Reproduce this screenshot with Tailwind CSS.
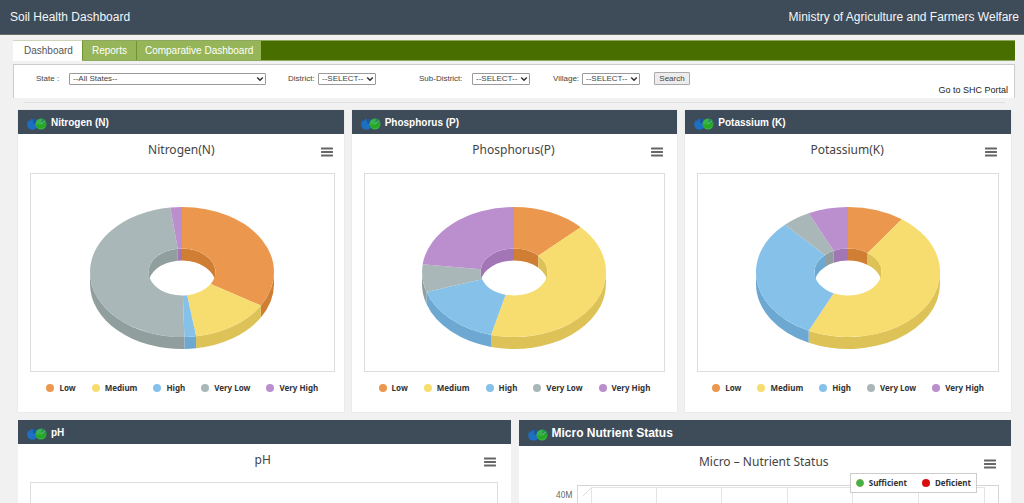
<!DOCTYPE html>
<html lang="en">
<head>
<meta charset="utf-8">
<meta name="viewport" content="width=device-width, initial-scale=1">
<title>Soil Health Dashboard</title>
<script src="https://cdn.jsdelivr.net/npm/@tailwindcss/browser@4"></script>
</head>
<body class="flex min-h-screen flex-col bg-[#f1f1f1] font-['Liberation_Sans',sans-serif]">

<svg class="hidden" aria-hidden="true">
  <symbol id="logo" viewBox="0 0 20 12">
    <path d="M5.500 .8 6.500 5 8.500 .6 10.500 3V9L8 11.300 5 11.800 2 10.700 .3 8 .4 4.500 2 2 3.200 3.500 4 1.200Z" fill="#1d6fc4"/>
    <path d="M6 .8 8.500 1 10 3 8 6 6.500 5Z" fill="#1c55a0"/>
    <circle cx="14" cy="6" r="5.500" fill="#37b34a"/>
    <path d="M8.500 6.500 14 6.500 19.200 4.500A5.500 5.500 0 0 1 8.500 6.500Z" fill="#27a822"/>
    <path d="M14 6 15 .6A5.500 5.500 0 0 1 19.400 4.800Z" fill="#2b8a55"/>
    <path d="M14 6 18 3" stroke="#7fdc8c" stroke-width=".7"/>
  </symbol>
  <symbol id="menu" viewBox="0 0 12 10">
    <path d="M.8 1.500H11.200M.8 5H11.200M.8 8.500H11.200" stroke="#666" stroke-width="2" stroke-linecap="round"/>
  </symbol>
  <symbol id="caret" viewBox="0 0 8 6">
    <path d="M1.200 1.500 4 4.300 6.800 1.500" fill="none" stroke="#333" stroke-width="1.500"/>
  </symbol>
</svg>

<header class="flex h-[35px] items-center justify-between border-b border-[#6b6b66] bg-[#3e4b58] pr-[5px] pl-[10px] text-[12px] text-[#f4f6f8]">
  <h1>Soil Health Dashboard</h1>
  <p>Ministry of Agriculture and Farmers Welfare</p>
</header>

<nav class="mt-[5px] mr-[9px] ml-[13px] flex h-[21px] border-y border-[#8fa860] bg-[#496e00] text-[10px] leading-[19px]">
  <a href="#" class="-mt-px -mb-px border-t border-[#cdd6bb] bg-white pr-[9px] pl-[11px] text-[#555]">Dashboard</a>
  <a href="#" class="border-r border-l border-[#6f9330] bg-[#95b558] px-[9px] text-white">Reports</a>
  <a href="#" class="bg-[#95b558] px-[8px] text-white">Comparative Dashboard</a>
</nav>

<form class="mt-[3px] mr-[9px] ml-[13px] h-[34px] border-t border-r border-l border-[#ccc] bg-white text-[8px] text-[#444]">
  <div class="flex items-center pt-[7px] pl-[22px]">
    <label for="state" class="w-[33px]">State :</label>
    <span class="grid w-[197px] items-center">
      <select id="state" class="col-start-1 row-start-1 h-[12px] appearance-none rounded-[1px] border border-[#999] bg-white pl-[3px] leading-none"><option>--All States--</option></select>
      <svg class="pointer-events-none col-start-1 row-start-1 mr-[2px] h-[6px] w-[8px] justify-self-end"><use href="#caret"/></svg>
    </span>
    <label for="district" class="ml-[22px] w-[30px]">District:</label>
    <span class="grid w-[58px] items-center">
      <select id="district" class="col-start-1 row-start-1 h-[12px] appearance-none rounded-[1px] border border-[#999] bg-white pl-[3px] leading-none"><option>--SELECT--</option></select>
      <svg class="pointer-events-none col-start-1 row-start-1 mr-[2px] h-[6px] w-[8px] justify-self-end"><use href="#caret"/></svg>
    </span>
    <label for="sub" class="ml-[43px] w-[53px]">Sub-District:</label>
    <span class="grid w-[58px] items-center">
      <select id="sub" class="col-start-1 row-start-1 h-[12px] appearance-none rounded-[1px] border border-[#999] bg-white pl-[3px] leading-none"><option>--SELECT--</option></select>
      <svg class="pointer-events-none col-start-1 row-start-1 mr-[2px] h-[6px] w-[8px] justify-self-end"><use href="#caret"/></svg>
    </span>
    <label for="village" class="ml-[23px] w-[29px]">Village:</label>
    <span class="grid w-[58px] items-center">
      <select id="village" class="col-start-1 row-start-1 h-[12px] appearance-none rounded-[1px] border border-[#999] bg-white pl-[3px] leading-none"><option>--SELECT--</option></select>
      <svg class="pointer-events-none col-start-1 row-start-1 mr-[2px] h-[6px] w-[8px] justify-self-end"><use href="#caret"/></svg>
    </span>
    <button type="button" class="ml-[14px] h-[13px] w-[36px] rounded-[1px] border border-[#aaa] bg-[#ececec] leading-none">Search</button>
  </div>
  <div class="pr-[6px] text-right text-[9px] leading-[10px] text-[#222]"><a href="#">Go to SHC Portal</a></div>
</form>
<hr class="mt-[4px] mr-[19px] ml-[24px] border-[#dfdfdf]">

<main class="mt-[7px] mr-[13px] ml-[18px] flex flex-1 flex-col gap-2">
  <div class="grid grid-cols-3 gap-2 font-['Noto_Sans',sans-serif]">
    <section class="h-[302px] bg-white shadow-[0_0_1px_#ccc]">
      <h2 class="flex h-[24px] items-center gap-[4px] bg-[#3e4b58] pl-[9px] font-['Liberation_Sans',sans-serif] text-[10px] font-bold text-white"><svg class="mt-[3px] h-[12px] w-[20px]"><use href="#logo"/></svg>Nitrogen (N)</h2>
      <div class="mr-[9px] ml-[12px]">
        <div class="grid h-[39px] grid-cols-[1fr_auto_1fr] pr-[2px]">
          <h3 class="col-start-2 pt-[7px] text-[12px] leading-[18px] text-[#444]">Nitrogen(N)</h3>
          <button type="button" aria-label="Chart menu" class="mt-[13px] h-[10px] w-[12px] justify-self-end"><svg class="block h-[10px] w-[12px]"><use href="#menu"/></svg></button>
        </div>
        <div class="flex h-[199px] justify-center border border-[#ddd] pt-[31px]"><svg data-pie="121,171.200,178.500,352.700,360" class="h-[148px] w-[188px]" viewBox="-94 -67 188 148"></svg></div>
        <ul data-legend class="flex justify-center gap-[16px] pt-[10px] text-[8px] leading-[12px] font-bold text-[#333]"></ul>
      </div>
    </section>
    <section class="h-[302px] bg-white shadow-[0_0_1px_#ccc]">
      <h2 class="flex h-[24px] items-center gap-[4px] bg-[#3e4b58] pl-[9px] font-['Liberation_Sans',sans-serif] text-[10px] font-bold text-white"><svg class="mt-[3px] h-[12px] w-[20px]"><use href="#logo"/></svg>Phosphorus (P)</h2>
      <div class="mx-[12px]">
        <div class="grid h-[39px] grid-cols-[1fr_auto_1fr] pr-[2px]">
          <h3 class="col-start-2 pt-[7px] text-[12px] leading-[18px] text-[#444]">Phosphorus(P)</h3>
          <button type="button" aria-label="Chart menu" class="mt-[13px] h-[10px] w-[12px] justify-self-end"><svg class="block h-[10px] w-[12px]"><use href="#menu"/></svg></button>
        </div>
        <div class="flex h-[199px] justify-center border border-[#ddd] pt-[31px]"><svg data-pie="46.500,194.500,252,276.800,360" class="h-[148px] w-[188px]" viewBox="-94 -67 188 148"></svg></div>
        <ul data-legend class="flex justify-center gap-[16px] pt-[10px] text-[8px] leading-[12px] font-bold text-[#333]"></ul>
      </div>
    </section>
    <section class="h-[302px] bg-white shadow-[0_0_1px_#ccc]">
      <h2 class="flex h-[24px] items-center gap-[4px] bg-[#3e4b58] pl-[9px] font-['Liberation_Sans',sans-serif] text-[10px] font-bold text-white"><svg class="mt-[3px] h-[12px] w-[20px]"><use href="#logo"/></svg>Potassium (K)</h2>
      <div class="mx-[12px]">
        <div class="grid h-[39px] grid-cols-[1fr_auto_1fr] pr-[2px]">
          <h3 class="col-start-2 pt-[7px] text-[12px] leading-[18px] text-[#444]">Potassium(K)</h3>
          <button type="button" aria-label="Chart menu" class="mt-[13px] h-[10px] w-[12px] justify-self-end"><svg class="block h-[10px] w-[12px]"><use href="#menu"/></svg></button>
        </div>
        <div class="flex h-[199px] justify-center border border-[#ddd] pt-[31px]"><svg data-pie="35.800,205.300,316.700,334.700,360" class="h-[148px] w-[188px]" viewBox="-94 -67 188 148"></svg></div>
        <ul data-legend class="flex justify-center gap-[16px] pt-[10px] text-[8px] leading-[12px] font-bold text-[#333]"></ul>
      </div>
    </section>
  </div>

  <div class="grid flex-1 grid-cols-2 gap-2 font-['Noto_Sans',sans-serif]">
    <section class="flex flex-col bg-white">
      <h2 class="flex h-[24px] items-center gap-[4px] bg-[#3e4b58] pl-[9px] font-['Liberation_Sans',sans-serif] text-[10px] font-bold text-white"><svg class="mt-[3px] h-[12px] w-[20px]"><use href="#logo"/></svg>pH</h2>
      <div class="mr-[13px] ml-[12px] flex flex-1 flex-col">
        <div class="grid h-[38px] grid-cols-[1fr_auto_1fr] pr-[2px]">
          <h3 class="col-start-2 pt-[7px] text-[12px] leading-[18px] text-[#444]">pH</h3>
          <button type="button" aria-label="Chart menu" class="mt-[13px] h-[10px] w-[12px] justify-self-end"><svg class="block h-[10px] w-[12px]"><use href="#menu"/></svg></button>
        </div>
        <div class="min-h-[21px] flex-1 border-x border-t border-[#ddd]"></div>
      </div>
    </section>
    <section class="relative flex flex-col bg-white">
      <h2 class="flex h-[26px] items-center gap-[4px] bg-[#3e4b58] pl-[9px] font-['Liberation_Sans',sans-serif] text-[12px] font-bold text-white"><svg class="mt-[4px] h-[12px] w-[20px]"><use href="#logo"/></svg>Micro Nutrient Status</h2>
      <div class="grid h-[39px] grid-cols-[1fr_auto_1fr] pr-[15px] pl-[13px]">
        <h3 class="col-start-2 pt-[7px] text-[12px] leading-[18px] text-[#444]">Micro – Nutrient Status</h3>
        <button type="button" aria-label="Chart menu" class="mt-[13px] h-[10px] w-[12px] justify-self-end"><svg class="block h-[10px] w-[12px]"><use href="#menu"/></svg></button>
      </div>
      <div class="mr-[12px] flex flex-1">
        <span class="w-[58px] pt-[4px] pr-[4px] text-right text-[8px] leading-[12px] text-[#666]">40M</span>
        <div class="flex min-h-[18px] flex-1 border-x border-t border-[#d5d5d5] pt-px pr-[13px]">
          <svg class="mt-px h-[8px] w-[13px]" viewBox="0 0 13 8"><path d="M5 8 13 0" stroke="#ddd"/></svg>
          <div class="grid flex-1 grid-cols-6 divide-x divide-[#e4e4e4] border-x border-t border-[#e4e4e4]"><i></i><i></i><i></i><i></i><i></i><i></i></div>
        </div>
      </div>
      <ul class="absolute top-[53px] right-[34px] flex h-[20px] items-center gap-[15px] border border-[#ccc] bg-white px-[5px] text-[8px] font-bold text-[#333]">
        <li class="flex items-center gap-[5px]"><i class="size-[8px] rounded-full border border-[#7aa83c] bg-[#3cb44b]"></i>Sufficient</li>
        <li class="flex items-center gap-[5px]"><i class="size-[8px] rounded-full bg-[#d90f0f]"></i>Deficient</li>
      </ul>
    </section>
  </div>
</main>

<script>
const SERIES = [
  ['Low', '#eb984e', '#d17e35'],
  ['Medium', '#f7dc6f', '#ddc357'],
  ['High', '#85c1e9', '#6ca8d1'],
  ['Very Low', '#aab7b8', '#909e9e'],
  ['Very High', '#bb8fce', '#a276b5']
];
const OUTER = [92, 65], INNER = [33.5, 23.5], DEPTH = 12;

// Point on an ellipse, angle in degrees clockwise from the top.
function point([rx, ry], deg, dy = 0) {
  const t = deg * Math.PI / 180;
  return (rx * Math.sin(t)).toFixed(2) + ' ' + (dy - ry * Math.cos(t)).toFixed(2);
}
function wall(r, a, b, color) {
  if (b <= a) return '';
  return `<path fill="${color}" d="M${point(r, a)}A${r} 0 0 1 ${point(r, b)}L${point(r, b, DEPTH)}A${r} 0 0 0 ${point(r, a, DEPTH)}Z"/>`;
}
document.querySelectorAll('[data-pie]').forEach(svg => {
  const ends = svg.dataset.pie.split(',').map(Number);
  let walls = '', faces = '';
  ends.forEach((b, i) => {
    const a = i ? ends[i - 1] : 0, [, face, side] = SERIES[i];
    walls += wall(INNER, a, Math.min(b, 90), side);
    walls += wall(INNER, Math.max(a, 270), b, side);
    walls += wall(OUTER, Math.max(a, 90), Math.min(b, 270), side);
    const big = b - a > 180 ? 1 : 0;
    faces += `<path fill="${face}" d="M${point(OUTER, a)}A${OUTER} 0 ${big} 1 ${point(OUTER, b)}L${point(INNER, b)}A${INNER} 0 ${big} 0 ${point(INNER, a)}Z"/>`;
  });
  svg.innerHTML = walls + faces;
});
document.querySelectorAll('[data-legend]').forEach(ul => {
  ul.innerHTML = SERIES.map(([name, color]) =>
    `<li class="flex items-center gap-[5px]"><i class="size-[8px] rounded-full" style="background:${color}"></i>${name}</li>`).join('');
});
</script>
</body>
</html>
